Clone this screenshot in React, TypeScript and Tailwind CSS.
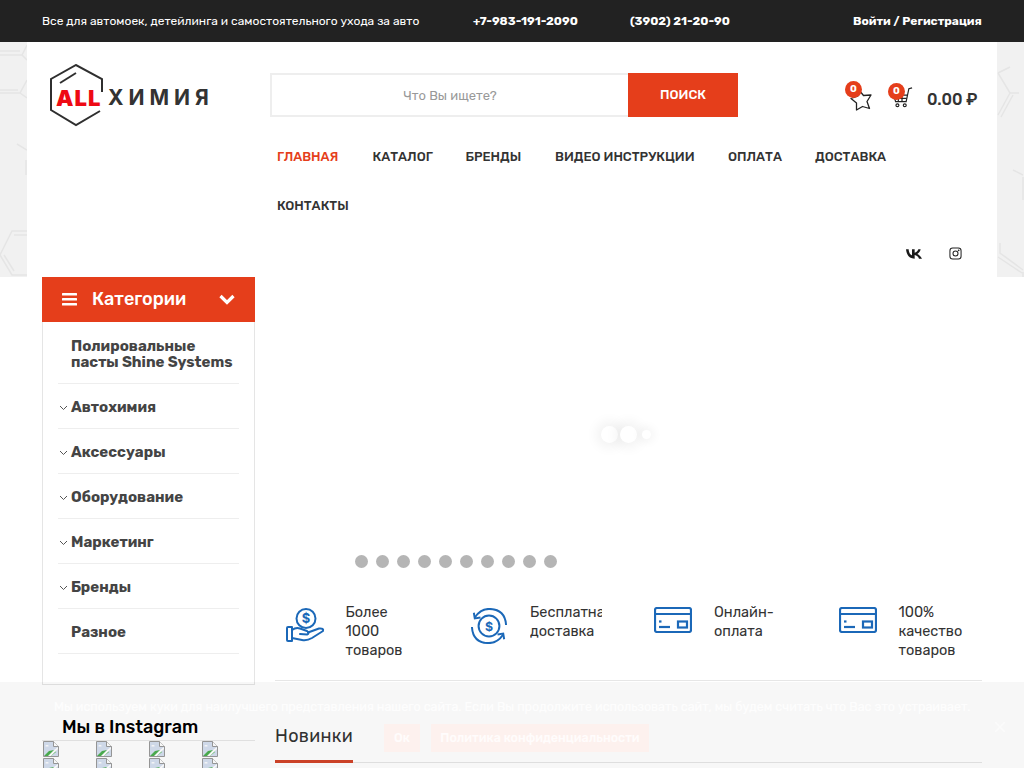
import React from "react";

const font = { fontFamily: "Rubik, Inter, 'Noto Sans', sans-serif" };

function SidePattern({ side }: { side: "l" | "r" }) {
  return side === "l" ? (
    <svg width="27" height="235" viewBox="0 0 27 235" className="shrink-0" fill="none" stroke="#e5e5e5" strokeWidth="1.5">
      <path d="M0 13 H22 L27 3 M0 9 H20 M22 13 L27 18" />
      <path d="M0 51 H20 L27 38 M20 51 L27 56 M0 48 H18" />
      <path d="M17 102 L27 108 M26 118 V133" />
      <path d="M27 189 H12 L0 213 L12 233 H27 M27 193 H14 M4 213 L14 229" />
    </svg>
  ) : (
    <svg width="27" height="235" viewBox="0 0 27 235" className="shrink-0" fill="none" stroke="#e5e5e5" strokeWidth="1.5">
      <path d="M1 31 L13 25 M1 31 L13 51 H22 M13 51 L1 73 M16 53 L4 75" />
      <path d="M16 128 L26 133 M26 135 V158" />
      <path d="M3 201 L3 211 L26 228 M1 215 L25 231 M26 230 V235" />
    </svg>
  );
}

function Logo() {
  return (
    <div className="relative w-[162px] h-[64px] ml-[22px] mt-[22px]">
      <svg width="58" height="64" viewBox="0 0 58 64" fill="none" stroke="#2f2f2f" strokeWidth="2" className="absolute left-0 top-0">
        <path d="M53 28 V15 L27 1 L2 15 V46 L27 61 L51 47" />
        <path d="M11 19 L27 9" />
      </svg>
      <span className="absolute left-[7px] top-[22px] text-[22px] leading-[24px] font-black text-[#ee0a14] bg-white tracking-[1px]" style={{ fontFamily: "Inter, sans-serif" }}>ALL</span>
      <span className="absolute left-[59px] top-[22px] text-[21px] leading-[24px] font-bold text-[#333] tracking-[5px]" style={{ fontFamily: "Inter, sans-serif" }}>ХИМИЯ</span>
    </div>
  );
}

function Badge({ className }: { className: string }) {
  return (
    <span className={"absolute w-[17px] h-[17px] rounded-full bg-[#e53e1b] text-white text-[10px] leading-[16px] font-bold text-center " + className}>0</span>
  );
}

function BrokenImg() {
  return (
    <svg width="16" height="16" viewBox="0 0 16 16" className="block">
      <path d="M0.5 0.5 H10.5 L15.5 5.5 V15.5 H0.5 Z" fill="#d5dff0" stroke="#9a9a9a" />
      <path d="M10.5 0.5 V5.5 H15.5" fill="#fff" stroke="#9a9a9a" />
      <path d="M2 5 q2 -2 4 0 q-2 1 -4 0 Z" fill="#fff" />
      <path d="M1 15 L6 10 L11 9 L13 11 L8 15 Z" fill="#4caf50" />
      <path d="M11 9 L15 6 V8 L8 15 H5 Z" fill="#fff" />
    </svg>
  );
}

function CardIcon() {
  return (
    <svg width="38" height="26" viewBox="0 0 38 26" fill="none" stroke="#1b68b8" strokeWidth="2.2" className="block">
      <rect x="1" y="1" width="36" height="24" rx="2" />
      <path d="M1 7 H37" />
      <rect x="24" y="14.5" width="9" height="6" />
      <path d="M5 20 H16" />
      <path d="M5 14.5 H7.5" />
    </svg>
  );
}

function HandIcon() {
  return (
    <svg width="40" height="36" viewBox="0 0 40 36" fill="none" stroke="#1b68b8" strokeWidth="2" strokeLinejoin="round" strokeLinecap="round" className="block">
      <circle cx="20" cy="10.5" r="9.5" />
      <text x="20" y="15" textAnchor="middle" fontSize="13" fontWeight="700" fill="#1b68b8" stroke="none" style={{ fontFamily: "Inter, sans-serif" }}>$</text>
      <path d="M6 19 H2 Q1 19 1 20 V32 Q1 33 2 33 H6 Z" />
      <path d="M6 22 Q10 19 14 20.5 L21 23 Q24 25 21 26.5 L14 26" />
      <path d="M22 24.5 L33 20.5 Q38 20 37 23 L26 30 Q21 33 16 32 L6 30" />
    </svg>
  );
}

function RefreshIcon() {
  return (
    <svg width="36" height="36" viewBox="0 0 38 38" fill="none" stroke="#1b68b8" strokeWidth="2.1" className="block">
      <circle cx="19" cy="19" r="11" />
      <text x="19" y="24" textAnchor="middle" fontSize="13" fontWeight="700" fill="#1b68b8" stroke="none" style={{ fontFamily: "Inter, sans-serif" }}>$</text>
      <path d="M4 10 Q10 1 19 1 Q36 1 37 18" />
      <path d="M34 28 Q28 37 19 37 Q2 37 1 20" />
      <path d="M3 5 L4 11 L10 10" />
      <path d="M28 28 L34 27 L35 33" />
    </svg>
  );
}

const menu: [string, boolean][] = [
  ["Автохимия", true],
  ["Аксессуары", true],
  ["Оборудование", true],
  ["Маркетинг", true],
  ["Бренды", true],
  ["Разное", false],
];

const nav = [
  ["ГЛАВНАЯ", "w-[95.5px]", "text-[#e53e1b]"],
  ["КАТАЛОГ", "w-[93px]", "text-[#333]"],
  ["БРЕНДЫ", "w-[89.5px]", "text-[#333]"],
  ["ВИДЕО ИНСТРУКЦИИ", "w-[173px]", "text-[#333]"],
  ["ОПЛАТА", "w-[87px]", "text-[#333]"],
  ["ДОСТАВКА", "w-[90px]", "text-[#333]"],
];

export default function App() {
  return (
    <div className="relative h-[768px] w-[1024px] overflow-hidden bg-white text-[#333]" style={font}>
      <div className="h-[42px] bg-[#222] flex items-center px-[42px] text-white text-[12px]">
        <span className="w-[431px]">Все для автомоек, детейлинга и самостоятельного ухода за авто</span>
        <span className="w-[157px] font-bold">+7-983-191-2090</span>
        <span className="w-[223px] font-bold">(3902) 21-20-90</span>
        <span className="font-bold">Войти / Регистрация</span>
      </div>

      <div className="flex h-[235px] bg-[#f1f1f1]">
        <SidePattern side="l" />
        <div className="w-[970px] bg-white flex">
          <div className="w-[243px]"><Logo /></div>
          <div className="flex-1 flex flex-col">
            <div className="flex items-center mt-[31px] h-[44px]">
              <div className="w-[358px] h-[44px] pt-[1px] border-2 border-[#eee] border-r-0 flex items-center justify-center text-[13px] text-[#999]">Что Вы ищете?</div>
              <div className="w-[110px] h-[44px] bg-[#e53e1b] text-white text-[13px] font-medium flex items-center justify-center">ПОИСК</div>
              <div className="relative w-[227px] h-[44px] text-[#333]">
                <svg width="24" height="24" viewBox="0 0 24 24" fill="none" stroke="#222" strokeWidth="1.3" strokeLinejoin="round" className="absolute left-[111px] top-[14px]">
                  <path d="M10 3 L14.5 8.5 L22 8 L18 14.5 L20.5 21.5 L13.5 19.5 L7.5 23 L7.5 16 L2 11.5 L9 9 Z" />
                </svg>
                <Badge className="left-[107px] top-[8px]" />
                <svg width="22" height="22" viewBox="0 0 24 24" fill="none" stroke="#222" strokeWidth="1.3" className="absolute left-[153px] top-[13px]">
                  <path d="M23 2 L19.5 3 L16.5 17 H5 L3 10 H18" />
                  <path d="M4 13.5 H17" />
                  <path d="M8 7 V17 M12 7 V17" />
                  <circle cx="7" cy="21" r="1.6" />
                  <circle cx="15" cy="21" r="1.6" />
                </svg>
                <Badge className="left-[150px] top-[10px]" />
                <span className="absolute left-[189px] top-[17px] text-[16px] leading-[20px] font-medium whitespace-nowrap">0.00 ₽</span>
              </div>
            </div>
            <div className="flex pl-[7px] mt-[30px] h-[20px] items-center text-[13px] font-medium">
              {nav.map(([t, w, c]) => (
                <span key={t} className={w + " " + c + " whitespace-nowrap"}>{t}</span>
              ))}
            </div>
            <div className="pl-[7px] mt-[29px] h-[20px] flex items-center text-[13px] font-medium">КОНТАКТЫ</div>
            <div className="relative mt-[28px] h-[20px]">
              <svg width="16" height="10" viewBox="0 0 24 14" fill="#1a1a1a" className="absolute left-[636px] top-[5px]">
                <path d="M13 14 C5 14 1 9 0 0 H4 C4.3 6 7 8.5 9 9 V0 H13 V5 C15.5 4.7 17.5 2.5 18.5 0 H22 C21.3 3 19.5 5.5 17 7 C19.5 8 22 10.5 24 14 H19.5 C18.5 11 16 9 13 8.5 Z" />
              </svg>
              <svg width="13" height="13" viewBox="0 0 14 14" fill="none" stroke="#222" strokeWidth="1.1" className="absolute left-[679px] top-[3px]">
                <rect x="1" y="1" width="12" height="12" rx="3" />
                <circle cx="7" cy="7" r="2.7" />
                <circle cx="10.4" cy="3.6" r="0.4" />
              </svg>
            </div>
          </div>
        </div>
        <SidePattern side="r" />
      </div>

      <div className="flex">
        <div className="w-[213px] ml-[42px] shrink-0">
          <div className="h-[45px] bg-[#e53e1b] text-white flex items-center pl-[20px] pr-[20px]">
            <svg width="15" height="13" viewBox="0 0 15 13" fill="#fff" className="block">
              <rect width="15" height="2.6" y="0" rx="0.5" />
              <rect width="15" height="2.6" y="5" rx="0.5" />
              <rect width="15" height="2.6" y="10" rx="0.5" />
            </svg>
            <span className="ml-[15px] flex-1 text-[18px] font-medium">Категории</span>
            <svg width="16" height="11" viewBox="0 0 16 11" fill="none" stroke="#fff" strokeWidth="3.2" className="block">
              <path d="M1.5 2 L8 8.5 L14.5 2" />
            </svg>
          </div>
          <div className="h-[362px] border-x border-[#e5e5e5] px-[15px] pt-[16px] text-[#444] text-[15px] font-bold">
            <div className="pl-[13px] leading-[16px] border-b border-[#eee] h-[46px]">
              Полировальные<br />пасты Shine Systems
            </div>
            {menu.map(([t, arrow]) => (
              <div key={t} className="h-[45px] pt-[2px] border-b border-[#eee] flex items-center pl-[13px] relative">
                {arrow && (
                  <svg width="9" height="6" viewBox="0 0 9 6" fill="none" stroke="#555" strokeWidth="1" className="absolute left-[1px] top-[21px]">
                    <path d="M1 1 L4.5 4.5 L8 1" />
                  </svg>
                )}
                {t}
              </div>
            ))}
          </div>
        </div>

        <div className="flex-1 ml-[20px] mr-[42px]">
          <div className="relative h-[300px]">
            <div className="absolute left-[326px] top-[149px] flex items-center">
              <span className="w-[17px] h-[17px] rounded-full bg-white shadow-[0_0_12px_5px_rgba(0,0,0,0.05)]" />
              <span className="ml-[2px] w-[17px] h-[17px] rounded-full bg-white shadow-[0_0_12px_5px_rgba(0,0,0,0.05)]" />
              <span className="ml-[5px] w-[9px] h-[9px] rounded-full bg-white shadow-[0_0_8px_4px_rgba(0,0,0,0.04)]" />
            </div>
          </div>
        </div>
      </div>

      <div className="absolute left-[355px] top-[555px] flex gap-[8px]">
        {Array.from({ length: 10 }).map((_, i) => (
          <span key={i} className="w-[13px] h-[13px] rounded-full bg-[#b5b5b5]" />
        ))}
      </div>

      <div className="absolute left-[275px] top-[603px] w-[707px] h-[78px] border-b border-[#e6e6e6] flex text-[14.5px] leading-[19px] text-[#333]">
        <div className="w-[184.5px] flex pl-[11px]">
          <div className="w-[59.5px] pt-[5px]"><HandIcon /></div>
          <div className="w-[70px]">Более<br />1000<br />товаров</div>
        </div>
        <div className="w-[184.5px] flex pl-[11.5px]">
          <div className="w-[59px] pt-[5px]"><RefreshIcon /></div>
          <div className="w-[72px] overflow-hidden whitespace-nowrap">Бесплатная<br />доставка</div>
        </div>
        <div className="w-[184.5px] flex pl-[10px]">
          <div className="w-[60px] pt-[4px]"><CardIcon /></div>
          <div className="w-[70px]">Онлайн-<br />оплата</div>
        </div>
        <div className="flex pl-[10px]">
          <div className="w-[60px] pt-[4px]"><CardIcon /></div>
          <div className="w-[70px]">100%<br />качество<br />товаров</div>
        </div>
      </div>

      <div className="absolute left-[275px] top-[722px] w-[707px] h-[41px] border-b border-[#e6e6e6]">
        <div className="h-[41px] text-[18px] leading-[28px] tracking-[0.3px] whitespace-nowrap border-b-[3px] border-[#d2452a] w-[78px]">Новинки</div>
      </div>

      <div className="absolute left-[42px] top-[684px] w-[213px] h-px bg-[#e5e5e5]" />
      <div className="absolute left-[42px] top-[715px] w-[213px] h-[26px] border-b border-[#e8e8e8]">
        <div className="pl-[20px] text-[18px] leading-[24px] text-black font-medium">Мы в Instagram</div>
      </div>
      <div className="absolute left-[43px] top-[741px] grid grid-cols-[53px_53px_53px_16px] gap-y-px">
        {Array.from({ length: 8 }).map((_, i) => <BrokenImg key={i} />)}
      </div>

      <div className="absolute left-0 right-0 bottom-0 h-[86px] bg-black/[0.03] text-white/80 text-[12.5px]">
        <div className="absolute left-[54px] top-[16px] whitespace-nowrap">Мы используем куки для наилучшего представления нашего сайта. Если Вы продолжите использовать сайт, мы будем считать что Вас это устраивает.</div>
        <div className="absolute left-[384px] top-[42px] h-[28px] w-[36px] bg-[#fdf1ee] flex items-center justify-center font-medium">Ок</div>
        <div className="absolute left-[431px] top-[42px] h-[28px] w-[218px] bg-[#fdf1ee] flex items-center justify-center font-medium whitespace-nowrap">Политика конфиденциальности</div>
        <svg width="10" height="10" viewBox="0 0 10 10" stroke="#fff" strokeWidth="1.5" className="absolute left-[995px] top-[40px] opacity-60">
          <path d="M0 0 L10 10 M10 0 L0 10" />
        </svg>
      </div>
    </div>
  );
}
